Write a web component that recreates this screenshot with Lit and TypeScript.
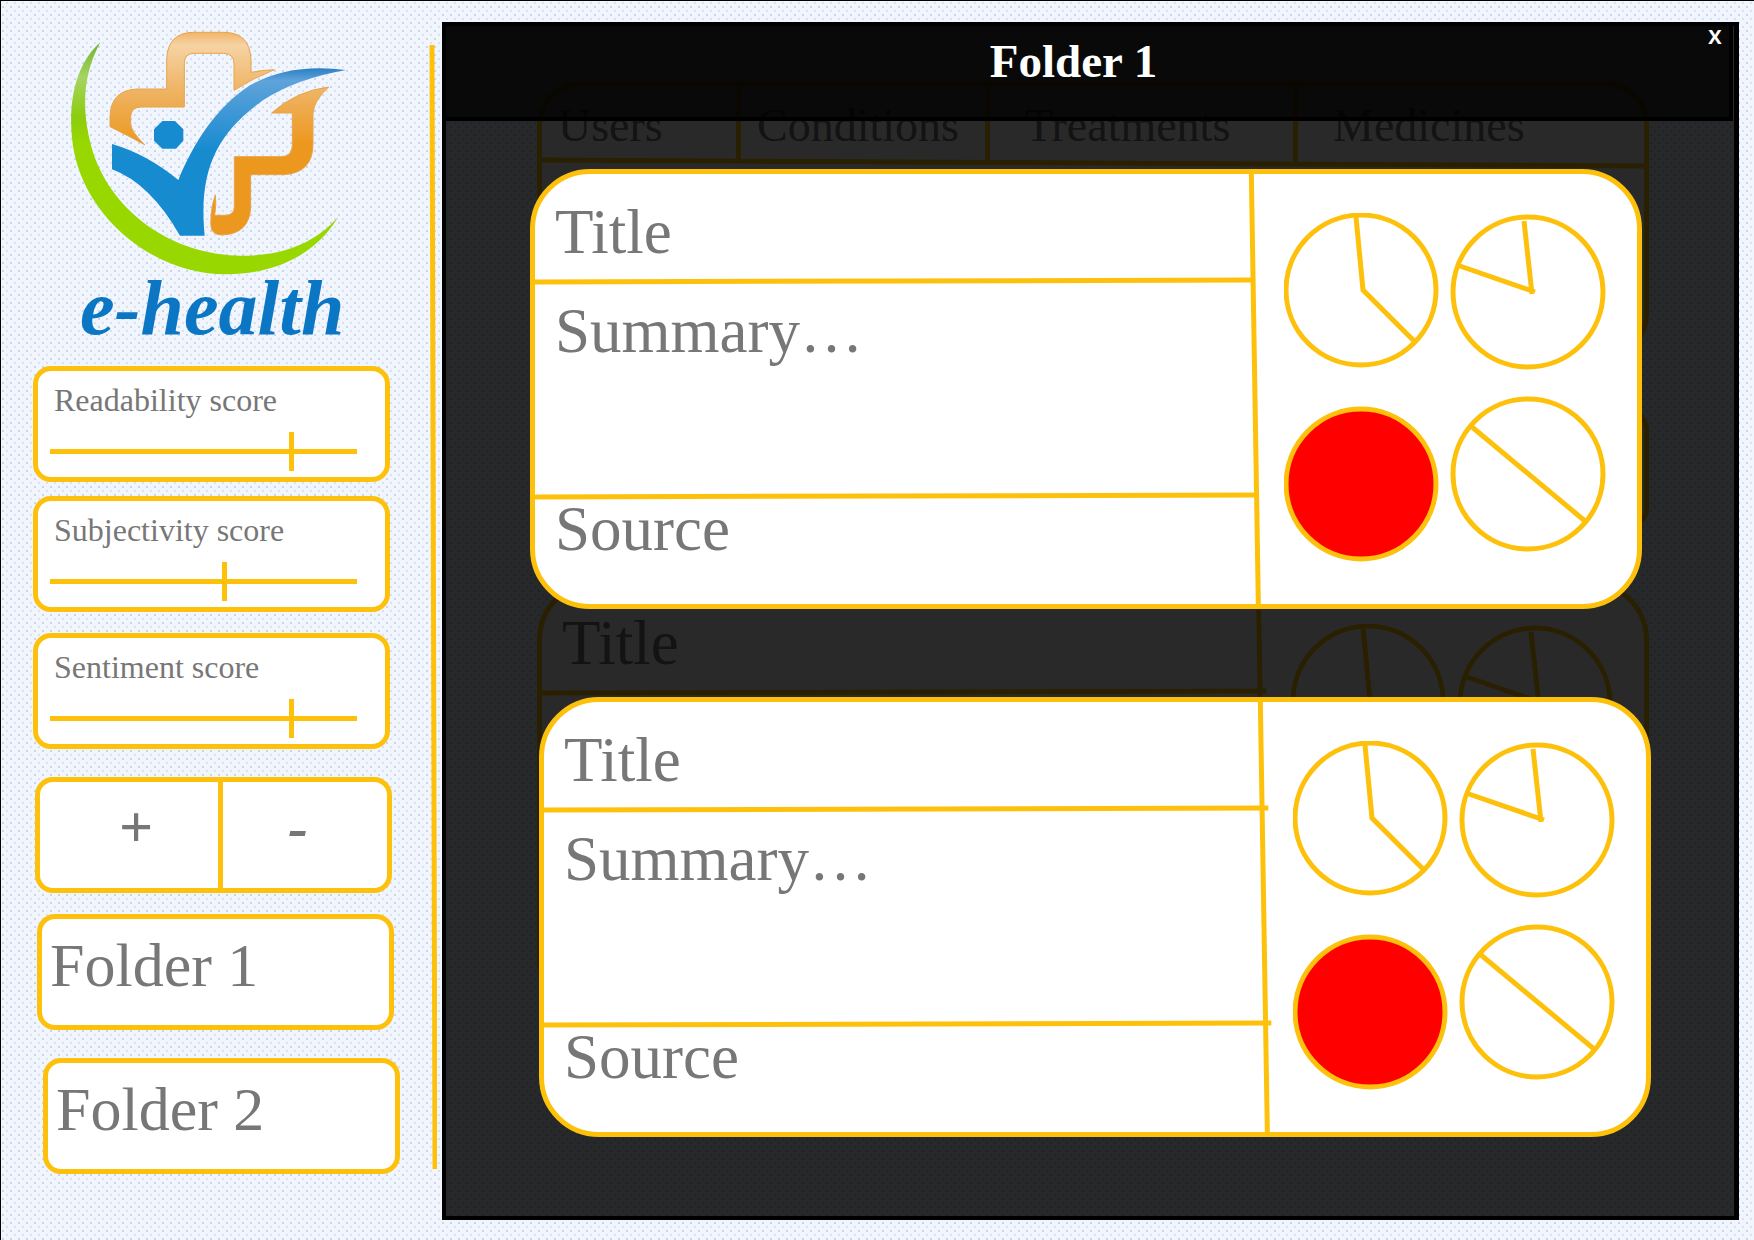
import { LitElement, html, css, svg } from "lit";
import { customElement, property, state } from "lit/decorators.js";
import { classMap } from "lit/directives/class-map.js";

const theme = css`
  :host {
    --gold: #fdc10c;
    --ink: #777777;
    --paper: #ffffff;
    --serif: "Liberation Serif", "Times New Roman", serif;
    font-family: var(--serif);
    color: var(--ink);
  }
  *,
  *::before,
  *::after {
    box-sizing: border-box;
  }
  button {
    appearance: none;
    border: 0;
    margin: 0;
    padding: 0;
    background: none;
    color: inherit;
    font: inherit;
    cursor: pointer;
  }
`;

@customElement("health-logo")
export class HealthLogo extends LitElement {
  static styles = [
    theme,
    css`
      :host {
        display: block;
      }
      .mark {
        display: block;
        width: 320px;
        height: 258px;
        overflow: visible;
      }
      .word {
        padding-left: 30px;
        font-size: 78px;
        line-height: 80px;
        font-weight: 700;
        font-style: italic;
        color: #0a76c4;
      }
    `,
  ];

  render() {
    return html`
      <svg class="mark" viewBox="0 0 960 774" aria-hidden="true">
        <defs>
          <linearGradient id="green" gradientUnits="userSpaceOnUse" x1="0" y1="95" x2="0" y2="400">
            <stop offset="0" stop-color="#6fb52c" />
            <stop offset="0.35" stop-color="#a5d460" />
            <stop offset="0.75" stop-color="#8ccc0c" />
            <stop offset="1" stop-color="#98d800" />
          </linearGradient>
          <linearGradient id="orange" gradientUnits="userSpaceOnUse" x1="0" y1="66" x2="0" y2="400">
            <stop offset="0" stop-color="#f0b468" />
            <stop offset="0.12" stop-color="#f6d3a3" />
            <stop offset="0.5" stop-color="#efb568" />
            <stop offset="1" stop-color="#ec981f" />
          </linearGradient>
          <linearGradient id="blue" gradientUnits="userSpaceOnUse" x1="0" y1="175" x2="0" y2="420">
            <stop offset="0" stop-color="#2b7fc4" />
            <stop offset="0.15" stop-color="#5fa3da" />
            <stop offset="1" stop-color="#178bd0" />
          </linearGradient>
        </defs>
        <path
          fill="url(#green)"
          d="M151 97C84 155 54 260 66 385C86 600 290 792 530 793C680 792 800 730 865 620C790 705 690 738 570 737C370 735 190 610 130 430C90 300 100 190 151 97Z"
        />
        <g fill="url(#orange)" stroke="#e9a44a" stroke-width="3" stroke-linejoin="round">
          <path
            d="M403 291V160Q403 130 433 130H520Q552 130 552 162V241Q610 204 673 179Q640 180 603 187V150Q600 66 520 67H430Q352 68 350 150V237H262Q182 240 180 320V350Q232 376 284 404Q242 364 242 340V322Q242 291 275 291Z"
          />
          <path
            d="M665 309H727V405Q727 440 692 440H553V590Q553 616 525 616H494Q500 580 496 555Q480 600 483 650Q486 674 515 675Q600 672 602 590V494H700Q790 490 789 400V310Q792 270 836 231Q738 243 665 309Z"
          />
        </g>
        <path
          fill="url(#blue)"
          d="M186 402Q290 432 385 510C430 400 500 290 600 226Q720 158 888 180Q740 206 640 270C500 370 445 480 464 677H390Q300 520 186 478Z"
        />
        <path
          fill="#178bd0"
          d="M337 333H375L400 358V392L378 416H337L312 392V358Z"
        />
      </svg>
      <div class="word">e-health</div>
    `;
  }
}

@customElement("score-slider")
export class ScoreSlider extends LitElement {
  @property() label = "";
  @property({ type: Number }) value = 50;

  static styles = [
    theme,
    css`
      :host {
        display: flex;
        flex-direction: column;
        gap: 14px;
        min-height: 116px;
        padding: 11px 28px 6px 12px;
        border: 5px solid var(--gold);
        border-radius: 18px;
        background: var(--paper);
      }
      .label {
        padding-left: 4px;
        font-size: 32px;
        line-height: 36px;
        white-space: nowrap;
      }
      .range {
        appearance: none;
        display: block;
        width: 100%;
        height: 39px;
        margin: 0;
        background: linear-gradient(var(--gold), var(--gold)) center / 100% 5px no-repeat;
      }
      .range::-webkit-slider-thumb {
        appearance: none;
        width: 5px;
        height: 39px;
        border: 0;
        border-radius: 0;
        background: var(--gold);
      }
    `,
  ];

  render() {
    return html`
      <label class="label" for="range">${this.label}</label>
      <input
        class="range"
        id="range"
        type="range"
        min="0"
        max="100"
        .value=${String(this.value)}
        @input=${(e: Event) => (this.value = Number((e.target as HTMLInputElement).value))}
      />
    `;
  }
}

@customElement("article-card")
export class ArticleCard extends LitElement {
  /** How far the horizontal rules run past the column rule. */
  @property({ type: Number }) overhang = 0;

  /** Shows the heading row and the charts only. */
  @property({ type: Boolean }) brief = false;

  static styles = [
    theme,
    css`
      :host {
        display: grid;
        grid-template-columns: 722fr 381fr;
        position: relative;
        min-height: 440px;
        border: 5px solid var(--gold);
        border-radius: 60px;
        background: var(--paper);
      }
      .rules {
        position: absolute;
        inset: 0;
        width: 100%;
        height: 100%;
        pointer-events: none;
      }
      .rules line,
      .charts * {
        stroke: var(--gold);
        stroke-width: 5;
      }
      .rules line {
        vector-effect: non-scaling-stroke;
      }
      .text {
        display: grid;
        grid-template-rows: 110px 215px 1fr;
        padding-left: 20px;
        font-size: 63px;
        line-height: 60px;
      }
      .title,
      .summary,
      .source {
        margin: 0;
        font-size: inherit;
        font-weight: 400;
      }
      .title {
        padding-top: 28px;
      }
      .summary {
        padding-top: 17px;
      }
      .charts {
        display: block;
        width: 322px;
        height: 349px;
        margin: 39px 0 0 28px;
        fill: none;
      }
      .charts .alert {
        fill: #ff0000;
      }
    `,
  ];

  render() {
    const end = 720 + this.overhang;
    return html`
      <div class="text">
        <h3 class="title">Title</h3>
        ${this.brief
          ? null
          : html`
              <p class="summary">Summary…</p>
              <p class="source">Source</p>
            `}
      </div>
      <svg class="charts" viewBox="0 0 322 349" role="img" aria-label="Article scores">
        <circle cx="77" cy="77" r="75" />
        <polyline points="72,4 79,77 131,129" />
        <circle cx="244" cy="79" r="75" />
        <path d="M240 8L248 81M251 79L173 52" />
        <circle class="alert" cx="77" cy="271" r="75" />
        <circle cx="244" cy="261" r="75" />
        <line x1="188" y1="214" x2="301" y2="308" />
      </svg>
      <svg class="rules" viewBox="0 0 1103 430" preserveAspectRatio="none" aria-hidden="true">
        ${svg`
          <line x1="0" y1="108" x2=${end} y2="106"></line>
          <line x1="0" y1="323" x2=${end + 3} y2="321"></line>
          <line x1="717" y1="0" x2="724" y2="430"></line>
        `}
      </svg>
    `;
  }
}

@customElement("folder-dialog")
export class FolderDialog extends LitElement {
  @property() heading = "";

  static styles = [
    theme,
    css`
      :host {
        display: block;
        border: 4px solid #000000;
        border-right-width: 5px;
        background: rgba(0, 0, 0, 0.84);
      }
      .bar {
        display: flex;
        align-items: flex-start;
        min-height: 99px;
        margin: -4px 1px 0 -4px;
        border: 4px solid #000000;
        background: rgba(0, 0, 0, 0.77);
        color: #ffffff;
      }
      .heading {
        flex: 1;
        margin: 0;
        padding-top: 7px;
        font-size: 47px;
        line-height: 56px;
        font-weight: 700;
        text-align: center;
      }
      .close {
        width: 28px;
        font-family: "Open Sans", sans-serif;
        font-size: 20px;
        line-height: 22px;
        font-weight: 700;
      }
      .list {
        display: flex;
        flex-direction: column;
        gap: 88px;
        padding: 48px 83px 48px 84px;
      }
      .item {
        width: calc(100% - 9px);
      }
      .item:nth-child(even) {
        align-self: flex-end;
      }
    `,
  ];

  render() {
    return html`
      <header class="bar">
        <h2 class="heading">${this.heading}</h2>
        <button
          class="close"
          type="button"
          @click=${() => this.dispatchEvent(new CustomEvent("close"))}
        >
          X
        </button>
      </header>
      <div class="list">
        <article-card class="item"></article-card>
        <article-card class="item" overhang="5"></article-card>
      </div>
    `;
  }
}

@customElement("app-root")
export class AppRoot extends LitElement {
  @state() private openFolder: string | null = "Folder 1";

  private tabs = [
    { name: "Users", wide: false },
    { name: "Conditions", wide: false },
    { name: "Treatments", wide: true },
    { name: "Medicines", wide: true },
  ];

  static styles = [
    theme,
    css`
      :host {
        display: grid;
        grid-template-columns: 441px 1fr;
        position: relative;
        min-height: 100vh;
        border-top: 1px solid #000000;
        border-left: 1px solid #000000;
        background-color: #f0f5fe;
        background-image: radial-gradient(circle at 2px 6px, #cdd4e3 0 1px, transparent 1px),
          radial-gradient(circle at 6px 2px, #dae1ee 0 1px, transparent 1px);
        background-size: 8px 8px;
      }
      .side {
        display: flex;
        padding: 9px 3px 0 32px;
      }
      .stack {
        width: 360px;
      }
      .logo {
        margin: 0 0 18px 17px;
      }
      .box {
        width: 357px;
        min-height: 116px;
        border: 5px solid var(--gold);
        border-radius: 18px;
        background: var(--paper);
      }
      .score {
        width: 357px;
        margin-top: 14px;
      }
      .spaced {
        margin-top: 21px;
      }
      .apart {
        margin-top: 28px;
      }
      .zoom {
        display: grid;
        grid-template-columns: 178fr 169fr;
        margin-left: 2px;
        font-size: 60px;
        font-weight: 700;
      }
      .step {
        padding: 0 0 16px 14px;
      }
      .step + .step {
        border-left: 5px solid var(--gold);
        padding: 0 14px 16px 0;
        font-style: italic;
      }
      .folder {
        display: block;
        margin-left: 4px;
        padding: 0 8px 14px;
        font-size: 62px;
        line-height: 68px;
        text-align: left;
      }
      .folder + .folder {
        margin-left: 10px;
      }
      .rail {
        flex: none;
        width: 8px;
        height: 1124px;
        margin: 35px 0 0 36px;
      }
      .slant {
        stroke: var(--gold);
        stroke-width: 5;
        vector-effect: non-scaling-stroke;
      }
      .main {
        display: flex;
        flex-direction: column;
        gap: 53px;
        padding: 80px 105px 0 95px;
      }
      .panel {
        min-height: 277px;
        border: 5px solid var(--gold);
        border-radius: 44px;
        background: var(--paper);
      }
      .tabs {
        display: grid;
        grid-template-columns: 194fr 249fr 308fr 351fr;
      }
      .tab {
        min-height: 77px;
        padding: 2px 16px 0;
        font-size: 46px;
        line-height: 50px;
        text-align: left;
      }
      .tab + .tab {
        border-left: 5px solid var(--gold);
      }
      .tab.wide {
        padding-left: 35px;
      }
      .underline {
        display: block;
        width: 100%;
        height: 12px;
        margin-top: -6px;
      }
      .filter {
        min-height: 116px;
        border: 5px solid var(--gold);
        border-radius: 18px;
        background: var(--paper);
      }
      .dialog {
        position: absolute;
        inset: 21px 15px 21px 441px;
      }
    `,
  ];

  private open(name: string) {
    this.openFolder = name;
  }

  render() {
    return html`
      <aside class="side">
        <div class="stack">
          <health-logo class="logo"></health-logo>
          <score-slider class="score" label="Readability score" value="79"></score-slider>
          <score-slider class="score" label="Subjectivity score" value="57"></score-slider>
          <score-slider class="score spaced" label="Sentiment score" value="79"></score-slider>
          <div class="box zoom apart">
            <button class="step" type="button">+</button>
            <button class="step" type="button">-</button>
          </div>
          <button class="box folder spaced" type="button" @click=${() => this.open("Folder 1")}>
            Folder 1
          </button>
          <button class="box folder apart" type="button" @click=${() => this.open("Folder 2")}>
            Folder 2
          </button>
        </div>
        <svg class="rail" viewBox="0 0 8 1124" preserveAspectRatio="none" aria-hidden="true">
          <line class="slant" x1="3" y1="0" x2="6" y2="1124" />
        </svg>
      </aside>
      <main class="main">
        <section class="panel">
          <nav class="tabs">
            ${this.tabs.map(
              (t) => html`
                <button class=${classMap({ tab: true, wide: t.wide })} type="button">
                  ${t.name}
                </button>
              `
            )}
          </nav>
          <svg class="underline" viewBox="0 0 100 12" preserveAspectRatio="none" aria-hidden="true">
            <line class="slant" x1="0" y1="3" x2="100" y2="9" />
          </svg>
        </section>
        <div class="filter"></div>
        <article-card overhang="5" brief></article-card>
      </main>
      ${this.openFolder
        ? html`<folder-dialog
            class="dialog"
            heading=${this.openFolder}
            @close=${() => (this.openFolder = null)}
          ></folder-dialog>`
        : null}
    `;
  }
}
